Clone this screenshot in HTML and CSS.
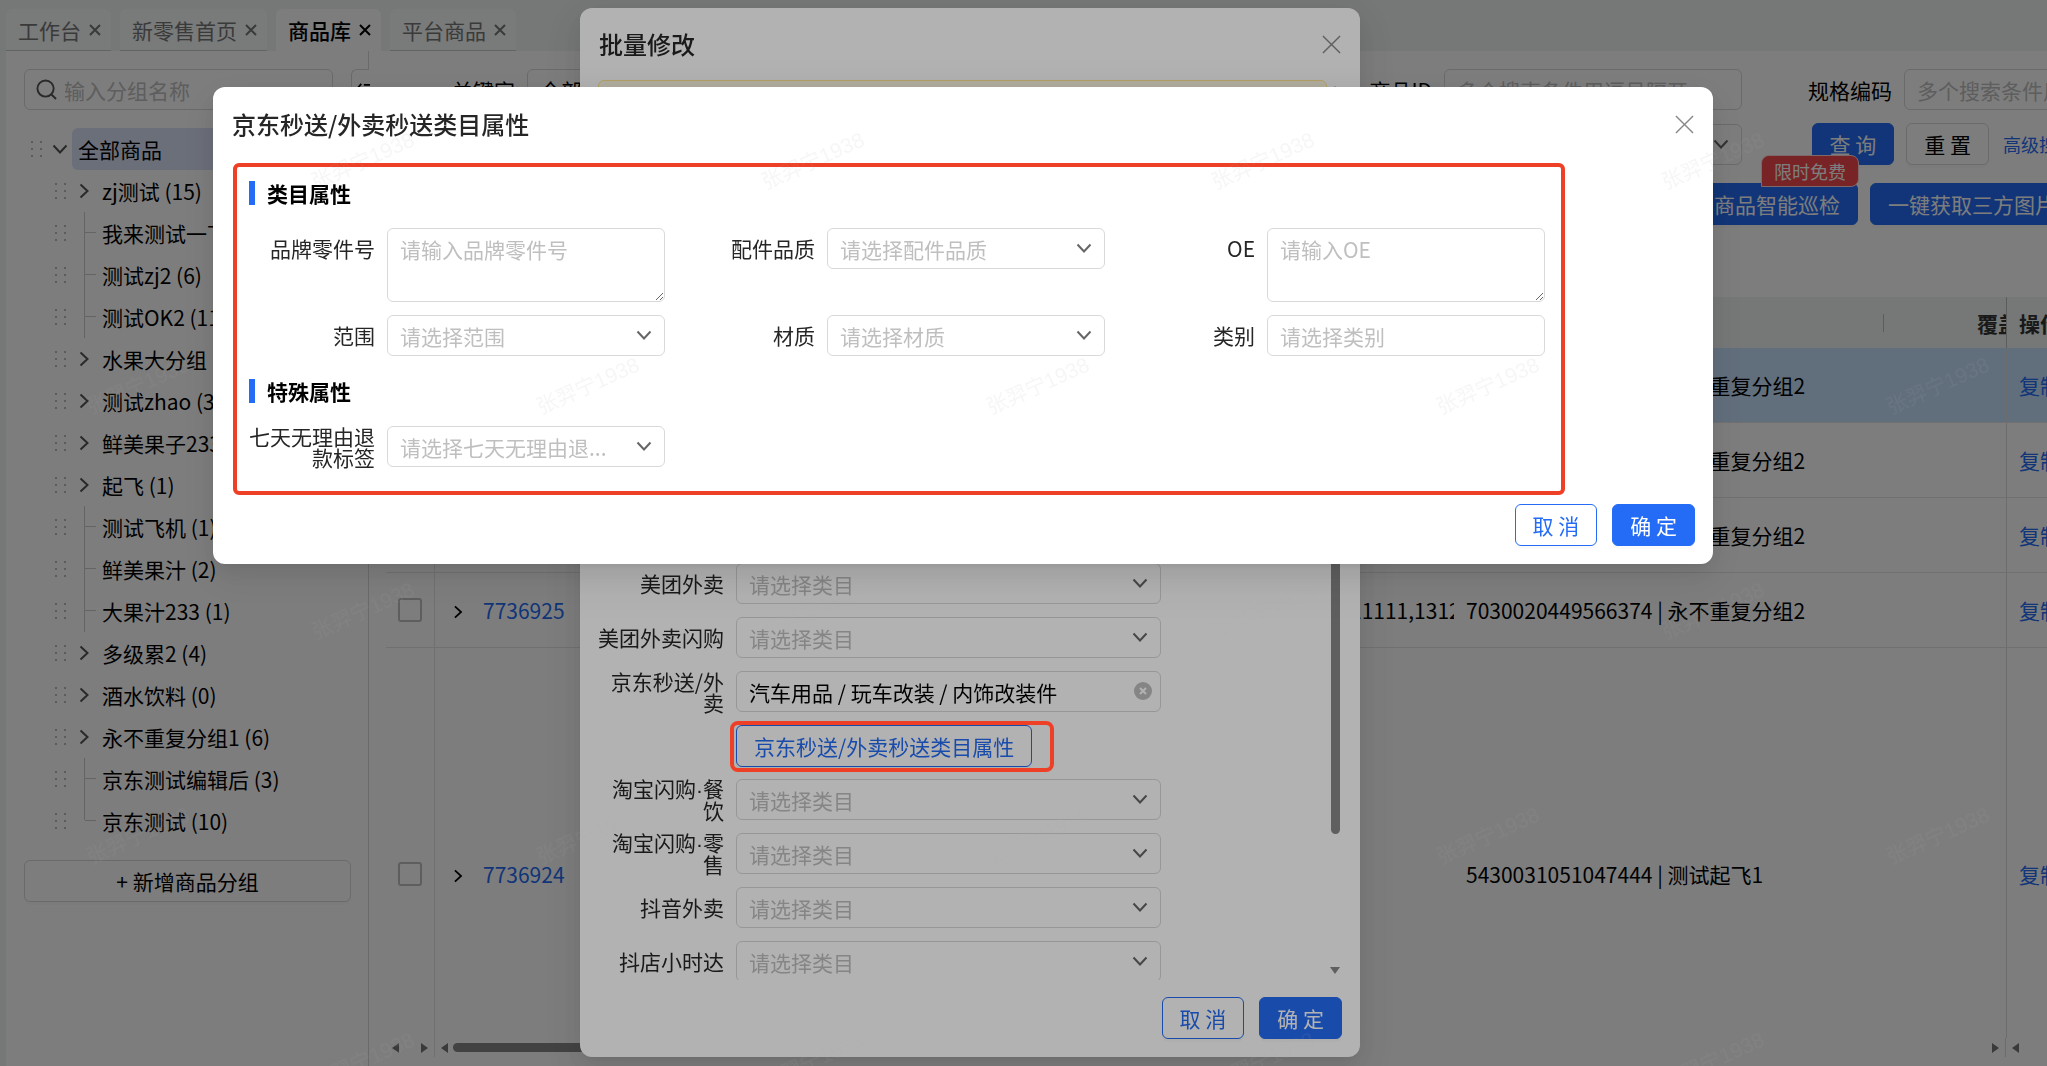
FILE: index.html
```html
<!DOCTYPE html>
<html lang="zh-CN">

<head>
    <meta charset="UTF-8">
    <meta name="viewport" content="width=device-width, initial-scale=1.0">
    <title>商品库</title>
    <link rel="stylesheet" href="styles.css">
</head>

<body>

    <!-- icons -->
    <svg class="sprite" aria-hidden="true">
        <symbol id="down" viewBox="0 0 16 16">
            <path d="M1.500 4.500 8 11.500l6.500-7" fill="none" stroke="currentColor" stroke-width="2" />
        </symbol>
        <symbol id="right" viewBox="0 0 16 16">
            <path d="M4.500 1.500 11.500 8l-7 6.500" fill="none" stroke="currentColor" stroke-width="2" />
        </symbol>
        <symbol id="close" viewBox="0 0 20 20">
            <path d="M1 1l18 18M19 1L1 19" fill="none" stroke="currentColor" stroke-width="1.500" />
        </symbol>
        <symbol id="cross" viewBox="0 0 12 12">
            <path d="M1 1l10 10M11 1L1 11" fill="none" stroke="currentColor" stroke-width="2" />
        </symbol>
        <symbol id="search" viewBox="0 0 22 22">
            <path d="M10 1.500a8.500 8.500 0 1 0 0 17a8.500 8.500 0 1 0 0-17M16 16l5 5" fill="none" stroke="currentColor" stroke-width="2" />
        </symbol>
        <symbol id="drag" viewBox="0 0 11 16">
            <path d="M0 0h2v2H0zM9 0h2v2H9zM0 7h2v2H0zM9 7h2v2H9zM0 14h2v2H0zM9 14h2v2H9z" fill="currentColor" />
        </symbol>
        <symbol id="clear" viewBox="0 0 18 18">
            <circle cx="9" cy="9" r="9" fill="currentColor" />
            <path d="M6 6l6 6M12 6l-6 6" stroke="#fff" stroke-width="2" />
        </symbol>
        <symbol id="arrow" viewBox="0 0 8 10">
            <path d="M0 0l7 5-7 5z" fill="currentColor" />
        </symbol>
    </svg>

    <div class="page">
        <nav class="tabs">
            <a href="#" class="tab">工作台<svg><use href="#cross" /></svg></a>
            <a href="#" class="tab">新零售首页<svg><use href="#cross" /></svg></a>
            <a href="#" class="tab active">商品库<svg><use href="#cross" /></svg></a>
            <a href="#" class="tab">平台商品<svg><use href="#cross" /></svg></a>
        </nav>

        <div class="workspace">
            <aside class="sidebar">
                <button class="fold" aria-label="收起"><svg viewBox="0 0 16 16"><path d="M6 1L1 7l5 6M9 2h7M9 8h7" fill="none" stroke="currentColor" stroke-width="2" /></svg></button>
                <label class="group-search">
                    <svg><use href="#search" /></svg>
                    <input type="text" placeholder="输入分组名称" aria-label="输入分组名称">
                </label>

                <ul class="tree">
                    <li class="root"><svg class="drag"><use href="#drag" /></svg><svg class="toggle"><use href="#down" /></svg><span class="name">全部商品</span></li>
                    <li><svg class="drag"><use href="#drag" /></svg><svg class="toggle"><use href="#right" /></svg><span class="name">zj测试 (15)</span></li>
                    <li><svg class="drag"><use href="#drag" /></svg><i class="branch"></i><span class="name">我来测试一下 (2)</span></li>
                    <li><svg class="drag"><use href="#drag" /></svg><i class="branch"></i><span class="name">测试zj2 (6)</span></li>
                    <li><svg class="drag"><use href="#drag" /></svg><i class="branch"></i><span class="name">测试OK2 (11)</span></li>
                    <li><svg class="drag"><use href="#drag" /></svg><svg class="toggle"><use href="#right" /></svg><span class="name">水果大分组 (8)</span></li>
                    <li><svg class="drag"><use href="#drag" /></svg><svg class="toggle"><use href="#right" /></svg><span class="name">测试zhao (3)</span></li>
                    <li><svg class="drag"><use href="#drag" /></svg><svg class="toggle"><use href="#right" /></svg><span class="name">鲜美果子233 (5)</span></li>
                    <li><svg class="drag"><use href="#drag" /></svg><svg class="toggle"><use href="#right" /></svg><span class="name">起飞 (1)</span></li>
                    <li><svg class="drag"><use href="#drag" /></svg><i class="branch"></i><span class="name">测试飞机 (1)</span></li>
                    <li><svg class="drag"><use href="#drag" /></svg><i class="branch"></i><span class="name">鲜美果汁 (2)</span></li>
                    <li><svg class="drag"><use href="#drag" /></svg><i class="branch"></i><span class="name">大果汁233 (1)</span></li>
                    <li><svg class="drag"><use href="#drag" /></svg><svg class="toggle"><use href="#right" /></svg><span class="name">多级累2 (4)</span></li>
                    <li><svg class="drag"><use href="#drag" /></svg><svg class="toggle"><use href="#right" /></svg><span class="name">酒水饮料 (0)</span></li>
                    <li><svg class="drag"><use href="#drag" /></svg><svg class="toggle"><use href="#right" /></svg><span class="name">永不重复分组1 (6)</span></li>
                    <li><svg class="drag"><use href="#drag" /></svg><i class="branch"></i><span class="name">京东测试编辑后 (3)</span></li>
                    <li><svg class="drag"><use href="#drag" /></svg><i class="branch last"></i><span class="name">京东测试 (10)</span></li>
                </ul>

                <button class="btn add-group">+ 新增商品分组</button>
            </aside>

            <main class="content">
                <div class="filters">
                    <div class="filter-row">
                        <label for="keyword">关键字</label>
                        <select id="keyword" class="field dark"><option>全部</option></select>
                        <label for="goods-id" class="push">商品ID</label>
                        <input id="goods-id" class="field" type="text" placeholder="多个搜索条件用逗号隔开">
                        <label for="spec-code" class="spec">规格编码</label>
                        <input id="spec-code" class="field" type="text" placeholder="多个搜索条件用逗号隔开">
                    </div>
                    <div class="filter-row second">
                        <div class="select state">
                            <select class="field" aria-label="状态"><option></option></select>
                            <svg><use href="#down" /></svg>
                        </div>
                        <button class="btn primary">查 询</button>
                        <button class="btn">重 置</button>
                        <a href="#" class="more">高级搜索</a>
                    </div>
                    <div class="filter-row third">
                        <button class="btn primary inspect">商品智能巡检<span class="badge">限时免费</span></button>
                        <button class="btn primary">一键获取三方图片</button>
                    </div>
                </div>

                <div class="table-box">
                    <table>
                        <colgroup>
                            <col class="c-check">
                            <col>
                            <col class="c-code">
                            <col class="c-cate">
                            <col class="c-cover">
                            <col class="c-op">
                        </colgroup>
                        <thead>
                            <tr>
                                <th></th>
                                <th></th>
                                <th></th>
                                <th><div class="split"></div></th>
                                <th class="cover">覆盖</th>
                                <th class="op">操作</th>
                            </tr>
                        </thead>
                        <tbody>
                            <tr class="selected">
                                <td class="check"><input type="checkbox" aria-label="选择7736928"></td>
                                <td class="id"><svg><use href="#right" /></svg><a href="#">7736928</a></td>
                                <td></td>
                                <td class="cate">7030020449566374 | 永不重复分组2</td>
                                <td></td>
                                <td class="op"><a href="#">复制</a></td>
                            </tr>
                            <tr>
                                <td class="check"><input type="checkbox" aria-label="选择7736927"></td>
                                <td class="id"><svg><use href="#right" /></svg><a href="#">7736927</a></td>
                                <td></td>
                                <td class="cate">7030020449566374 | 永不重复分组2</td>
                                <td></td>
                                <td class="op"><a href="#">复制</a></td>
                            </tr>
                            <tr>
                                <td class="check"><input type="checkbox" aria-label="选择7736926"></td>
                                <td class="id"><svg><use href="#right" /></svg><a href="#">7736926</a></td>
                                <td></td>
                                <td class="cate">7030020449566374 | 永不重复分组2</td>
                                <td></td>
                                <td class="op"><a href="#">复制</a></td>
                            </tr>
                            <tr>
                                <td class="check"><input type="checkbox" aria-label="选择7736925"></td>
                                <td class="id"><svg><use href="#right" /></svg><a href="#">7736925</a></td>
                                <td class="code">11111,1312</td>
                                <td class="cate">7030020449566374 | 永不重复分组2</td>
                                <td></td>
                                <td class="op"><a href="#">复制</a></td>
                            </tr>
                            <tr class="tall">
                                <td class="check"><input type="checkbox" aria-label="选择7736924"></td>
                                <td class="id"><svg><use href="#right" /></svg><a href="#">7736924</a></td>
                                <td></td>
                                <td class="cate">5430031051047444 | 测试起飞1</td>
                                <td></td>
                                <td class="op"><a href="#">复制</a></td>
                            </tr>
                        </tbody>
                    </table>
                </div>
                <div class="hscroll">
                    <div class="hs-left"><svg class="flip"><use href="#arrow" /></svg><svg><use href="#arrow" /></svg></div>
                    <div class="hs-main"><svg class="flip"><use href="#arrow" /></svg><div class="thumb"></div><svg><use href="#arrow" /></svg></div>
                    <div class="hs-right"><svg class="flip"><use href="#arrow" /></svg></div>
                </div>
            </main>
        </div>
    </div>

    <!-- batch edit -->
    <div class="mask mask-batch">
        <section class="modal batch" role="dialog" aria-labelledby="batch-title">
            <header class="modal-head">
                <h2 id="batch-title">批量修改</h2>
                <button class="x" aria-label="关闭"><svg><use href="#close" /></svg></button>
            </header>
            <div class="batch-body">
                <div class="batch-form">
                    <div class="notice"></div>
                    <div class="item">
                        <label for="mt">美团外卖</label>
                        <div class="select"><select id="mt" class="field"><option>请选择类目</option></select><svg><use href="#down" /></svg></div>
                    </div>
                    <div class="item">
                        <label for="mtsg">美团外卖闪购</label>
                        <div class="select"><select id="mtsg" class="field"><option>请选择类目</option></select><svg><use href="#down" /></svg></div>
                    </div>
                    <div class="item">
                        <label for="jd">京东秒送/外卖</label>
                        <div class="select"><select id="jd" class="field dark"><option>汽车用品 / 玩车改装 / 内饰改装件</option></select><svg class="clear"><use href="#clear" /></svg></div>
                    </div>
                    <div class="item indent">
                        <button class="btn ghost">京东秒送/外卖秒送类目属性</button>
                    </div>
                    <div class="item">
                        <label for="tbcy">淘宝闪购<span class="dot">·</span>餐饮</label>
                        <div class="select"><select id="tbcy" class="field"><option>请选择类目</option></select><svg><use href="#down" /></svg></div>
                    </div>
                    <div class="item">
                        <label for="tbls">淘宝闪购<span class="dot">·</span>零售</label>
                        <div class="select"><select id="tbls" class="field"><option>请选择类目</option></select><svg><use href="#down" /></svg></div>
                    </div>
                    <div class="item">
                        <label for="dy">抖音外卖</label>
                        <div class="select"><select id="dy" class="field"><option>请选择类目</option></select><svg><use href="#down" /></svg></div>
                    </div>
                    <div class="item">
                        <label for="dd">抖店小时达</label>
                        <div class="select"><select id="dd" class="field"><option>请选择类目</option></select><svg><use href="#down" /></svg></div>
                    </div>
                </div>
                <div class="vscroll">
                    <svg class="up"><use href="#arrow" /></svg>
                    <div class="thumb"></div>
                    <svg class="down"><use href="#arrow" /></svg>
                </div>
            </div>
            <footer class="modal-foot">
                <button class="btn ghost">取 消</button>
                <button class="btn primary">确 定</button>
            </footer>
        </section>
    </div>

    <!-- category attributes -->
    <div class="mask mask-attr">
        <section class="modal attr" role="dialog" aria-labelledby="attr-title">
            <header class="modal-head">
                <h2 id="attr-title">京东秒送/外卖秒送类目属性</h2>
                <button class="x" aria-label="关闭"><svg><use href="#close" /></svg></button>
            </header>
            <div class="attr-body">
                <h3>类目属性</h3>
                <div class="attr-grid">
                    <div class="item">
                        <label for="brand">品牌零件号</label>
                        <textarea id="brand" class="field" placeholder="请输入品牌零件号"></textarea>
                    </div>
                    <div class="item">
                        <label for="quality">配件品质</label>
                        <div class="select"><select id="quality" class="field"><option>请选择配件品质</option></select><svg><use href="#down" /></svg></div>
                    </div>
                    <div class="item">
                        <label for="oe">OE</label>
                        <textarea id="oe" class="field" placeholder="请输入OE"></textarea>
                    </div>
                    <div class="item">
                        <label for="range">范围</label>
                        <div class="select"><select id="range" class="field"><option>请选择范围</option></select><svg><use href="#down" /></svg></div>
                    </div>
                    <div class="item">
                        <label for="material">材质</label>
                        <div class="select"><select id="material" class="field"><option>请选择材质</option></select><svg><use href="#down" /></svg></div>
                    </div>
                    <div class="item">
                        <label for="kind">类别</label>
                        <input id="kind" class="field" type="text" placeholder="请选择类别">
                    </div>
                </div>
                <h3>特殊属性</h3>
                <div class="attr-grid">
                    <div class="item">
                        <label for="seven">七天无理由退款标签</label>
                        <div class="select"><select id="seven" class="field"><option>请选择七天无理由退...</option></select><svg><use href="#down" /></svg></div>
                    </div>
                </div>
            </div>
            <footer class="modal-foot">
                <button class="btn ghost">取 消</button>
                <button class="btn primary">确 定</button>
            </footer>
        </section>
    </div>

    <div class="callout"></div>

    <svg class="watermark" aria-hidden="true">
        <defs>
            <pattern id="wm" width="450" height="450" patternUnits="userSpaceOnUse">
                <text x="363" y="168" text-anchor="middle" transform="rotate(-24 363 161)">张羿宁1938</text>
                <text x="138" y="393" text-anchor="middle" transform="rotate(-24 138 386)">张羿宁1938</text>
            </pattern>
        </defs>
        <rect width="100%" height="100%" fill="url(#wm)" />
    </svg>

</body>

</html>
```
FILE: styles.css
```css
* {
    box-sizing: border-box;
}

body {
    margin: 0;
    height: 100vh;
    overflow: hidden;
    font-family: "Noto Sans CJK SC", sans-serif;
    font-size: 21px;
    line-height: 30px;
    color: #000;
    background: #eff4f2;
}

a {
    color: #246cf5;
    text-decoration: none;
}

button,
input,
select,
textarea {
    font: inherit;
    color: inherit;
}

button {
    cursor: pointer;
}

.sprite {
    display: none;
}

.page {
    height: 100vh;
    padding: 9px 0 0 6px;
    display: flex;
    flex-direction: column;
}

/* tabs */
.tabs {
    display: flex;
    gap: 9px;
}

.tab {
    display: flex;
    align-items: center;
    gap: 8px;
    height: 42px;
    padding: 0 10px 0 12px;
    background: #f6f8f8;
    border-bottom: 1px solid #c8cccc;
    border-radius: 6px 6px 0 0;
    color: #777;
}

.tab svg {
    width: 12px;
    height: 12px;
}

.tab.active {
    background: #fff;
    border-color: #fff;
    color: #000;
    font-weight: 500;
}

.workspace {
    flex: 1;
    min-height: 0;
    display: flex;
    background: #fff;
}

/* sidebar */
.sidebar {
    position: relative;
    width: 363px;
    flex: none;
    padding: 18px 17px 0 18px;
    border-right: 1px solid #d9d9d9;
}

.fold {
    position: absolute;
    top: 18px;
    right: -1px;
    width: 18px;
    height: 42px;
    padding: 0 0 0 4px;
    background: #fff;
    border: solid #d9d9d9;
    border-width: 1px 0 1px 1px;
    border-radius: 6px 0 0 6px;
}

.fold svg {
    display: block;
    width: 14px;
    height: 14px;
}

.group-search {
    display: flex;
    align-items: center;
    gap: 7px;
    width: 309px;
    height: 41px;
    padding: 0 11px;
    border: 1px solid #d9d9d9;
    border-radius: 6px;
    color: #555;
}

.group-search svg {
    width: 21px;
    height: 21px;
    flex: none;
}

.group-search input {
    flex: 1;
    min-width: 0;
    padding: 0;
    border: none;
    outline: none;
    background: none;
}

::placeholder {
    color: #bfbfbf;
    opacity: 1;
}

.tree {
    list-style: none;
    margin: 18px 0 18px -18px;
    padding: 0;
}

.tree li {
    display: flex;
    align-items: center;
    height: 42px;
    padding-left: 49px;
}

.tree li.root {
    padding-left: 25px;
}

.drag {
    width: 11px;
    height: 16px;
    margin-right: 6px;
    flex: none;
    color: #bbb;
}

.toggle {
    width: 16px;
    height: 16px;
    margin: 0 4px;
    flex: none;
    color: #555;
}

.branch {
    align-self: stretch;
    flex: none;
    width: 12px;
    margin-left: 12px;
    border-left: 1px solid #ccc;
}

.branch::before {
    content: "";
    display: block;
    height: 20px;
    border-bottom: 1px solid #ccc;
}

.branch.last {
    height: 20px;
}

.tree .name {
    flex: 1;
    padding: 0 6px;
    line-height: 42px;
    border-radius: 6px;
    white-space: nowrap;
}

.tree .root .name {
    background: #dbe2f8;
}

/* controls */
.btn {
    height: 42px;
    padding: 0 17px;
    border: 1px solid #d9d9d9;
    border-radius: 6px;
    background: #fff;
    white-space: nowrap;
    box-shadow: 0 3px 0 rgba(0, 0, 0, 0.02);
}

.btn.primary {
    background: #246cf5;
    border-color: #246cf5;
    color: #fff;
}

.btn.ghost {
    border-color: #246cf5;
    color: #246cf5;
}

.add-group {
    width: 100%;
}

.field {
    display: block;
    width: 100%;
    height: 41px;
    padding: 0 12px;
    border: 1px solid #d9d9d9;
    border-radius: 6px;
    background: #fff;
    color: #bfbfbf;
    outline: none;
    appearance: none;
    white-space: nowrap;
    overflow: hidden;
    text-overflow: ellipsis;
}

.field.dark {
    color: #000;
}

textarea.field {
    height: 74px;
    padding: 4px 12px;
    line-height: 33px;
    resize: both;
}

.select {
    position: relative;
}

.select .field {
    padding-right: 54px;
}

.select svg {
    position: absolute;
    right: 13px;
    top: 12px;
    width: 16px;
    height: 16px;
    color: #666;
    pointer-events: none;
}

.select svg.clear {
    top: 11px;
    right: 9px;
    width: 18px;
    height: 18px;
    color: #bfbfbf;
}

/* filters */
.content {
    flex: 1;
    min-width: 0;
    display: flex;
    flex-direction: column;
    overflow: hidden;
}

.filters {
    padding: 18px 0 0 83px;
}

.filter-row {
    display: flex;
    align-items: center;
    gap: 12px;
    margin: 0 -155px 13px 0;
}

.filter-row .field {
    width: 298px;
    flex: none;
}

.filter-row label {
    white-space: nowrap;
}

.filter-row .push {
    margin-left: auto;
}

.filter-row .spec {
    margin-left: 54px;
}

.filter-row.second {
    justify-content: flex-end;
    margin: 0 -28px 18px 0;
}

.filter-row .state {
    margin-right: 58px;
}

.more {
    margin-left: 2px;
    font-size: 18px;
}

.filter-row.third {
    justify-content: flex-end;
    margin: 0 -27px 0 0;
}

.inspect {
    position: relative;
}

.badge {
    position: absolute;
    top: -29px;
    right: -2px;
    height: 32px;
    padding: 0 12px;
    border: 1px solid #ffd6d6;
    border-radius: 8px 8px 8px 0;
    background: #f5484e;
    color: #fff;
    font-size: 18px;
    line-height: 30px;
}

/* table */
.table-box {
    flex: 1;
    min-height: 0;
    margin: 72px 0 0 17px;
    overflow: hidden;
}

table {
    width: 100%;
    border-collapse: separate;
    border-spacing: 0;
    table-layout: fixed;
}

.c-check {
    width: 49px;
}

.c-code {
    width: 112px;
}

.c-cate {
    width: 430px;
}

.c-cover {
    width: 122px;
}

.c-op {
    width: 41px;
}

th {
    height: 51px;
    padding: 0;
    background: #eff4f2;
    text-align: left;
    color: #333;
    font-weight: 700;
    white-space: nowrap;
    overflow: hidden;
}

th .split {
    height: 18px;
    border-right: 1px solid #bbb;
}

th.cover {
    padding-left: 93px;
}

td {
    height: 75px;
    padding: 0;
    border-bottom: 1px solid #e5e5e5;
    white-space: nowrap;
    overflow: hidden;
}

.tall td {
    height: 453px;
}

.selected td {
    background: #c7e1fd;
}

.check {
    border-right: 1px solid #e5e5e5;
    text-align: center;
}

.check input {
    appearance: none;
    display: block;
    width: 24px;
    height: 24px;
    margin: 0 auto;
    border: 2px solid #bfbfbf;
    border-radius: 3px;
}

.id svg {
    width: 14px;
    height: 14px;
    margin: 0 18px 0 16px;
}

.code {
    padding-left: 8px;
}

.cate {
    padding-left: 12px;
}

.op {
    padding-left: 12px;
    border-left: 1px solid #ddd;
}

th.op {
    border-left-color: #bbb;
}

.hscroll {
    display: flex;
    height: 19px;
    margin: 0 0 9px 17px;
    color: #777;
}

.hscroll svg {
    width: 8px;
    height: 10px;
}

.hscroll .flip {
    transform: rotate(180deg);
}

.hscroll > div {
    display: flex;
    align-items: center;
    justify-content: space-between;
    padding: 0 5px;
}

.hs-left {
    width: 49px;
    border-right: 1px solid #e5e5e5;
}

.hs-main {
    flex: 1;
}

.hs-main .thumb {
    width: 400px;
    height: 9px;
    margin: 0 auto 0 5px;
    border-radius: 5px;
    background: #888;
}

.hs-right {
    width: 42px;
    border-left: 1px solid #ddd;
}

/* modals */
.mask {
    position: fixed;
    inset: 0;
    display: flex;
    justify-content: center;
    align-items: flex-start;
    background: rgba(0, 0, 0, 0.3);
}

.mask-batch {
    padding: 8px 107px 0 0;
}

.mask-attr {
    padding: 87px 121px 0 0;
}

.modal {
    border-radius: 12px;
    background: #fff;
    box-shadow: 0 9px 24px rgba(0, 0, 0, 0.08), 0 4px 9px -6px rgba(0, 0, 0, 0.12), 0 13px 42px 12px rgba(0, 0, 0, 0.05);
}

.batch {
    width: 780px;
}

.attr {
    width: 1500px;
    max-width: 100%;
}

.modal-head {
    display: flex;
    align-items: center;
    justify-content: space-between;
    padding: 18px 19px;
}

.attr .modal-head {
    padding: 19px 19px 21px;
}

.modal-head h2 {
    margin: 0;
    font-size: 24px;
    line-height: 36px;
    font-weight: 500;
    color: #262626;
}

.x {
    padding: 0;
    border: none;
    background: none;
    color: #888;
}

.x svg {
    display: block;
    width: 19px;
    height: 19px;
}

.modal-foot {
    display: flex;
    justify-content: flex-end;
    gap: 15px;
    padding: 0 18px 18px;
}

.modal label {
    flex: none;
    width: 126px;
    line-height: 21px;
    text-align: right;
    color: #262626;
}

.item {
    display: flex;
    gap: 12px;
    align-items: center;
}

.item > .select,
.item > .field {
    flex: 1;
    min-width: 0;
}

.batch-body {
    display: flex;
    gap: 3px;
    height: calc(100vh - 166px);
    margin-bottom: 17px;
    padding: 0 20px 0 18px;
}

.batch-form {
    flex: 1;
    overflow: hidden;
}

.notice {
    height: 60px;
    margin-bottom: 423px;
    border: 1px solid #ffe58f;
    border-radius: 6px;
    background: #fffbe6;
}

.batch-form .item {
    height: 41px;
    margin-bottom: 13px;
}

.batch-form .indent {
    padding-left: 138px;
}

.batch-form .select {
    flex: none;
    width: 425px;
}

.dot {
    font-family: "Liberation Sans", sans-serif;
}

.vscroll {
    display: flex;
    flex-direction: column;
    align-items: center;
    width: 10px;
    padding: 4px 0;
    color: #888;
}

.vscroll svg {
    width: 8px;
    height: 10px;
}

.vscroll .up {
    transform: rotate(-90deg);
}

.vscroll .down {
    margin-top: auto;
    transform: rotate(90deg);
}

.vscroll .thumb {
    width: 9px;
    height: 734px;
    margin-top: 6px;
    border-radius: 5px;
    background: #888;
}

.attr-body {
    margin: 0 148px 9px 20px;
    padding: 10px 16px 24px 12px;
    border: 4px solid #ee4026;
    border-radius: 6px;
}

.attr-body h3 {
    display: flex;
    align-items: center;
    gap: 12px;
    margin: 0 0 19px;
    font-size: 21px;
    line-height: 32px;
    font-weight: 700;
}

.attr-body h3::before {
    content: "";
    width: 6px;
    height: 24px;
    background: #246cf5;
}

.attr-grid {
    display: grid;
    grid-template-columns: repeat(3, 1fr);
    gap: 13px 24px;
}

.attr-grid + h3 {
    margin-top: 19px;
}

.attr-grid .item {
    align-items: flex-start;
}

.attr-grid label {
    display: flex;
    align-items: center;
    justify-content: flex-end;
    height: 41px;
}

/* red frame round the attribute button, above both masks */
.callout {
    position: fixed;
    top: 721px;
    left: calc(50% - 294px);
    width: 324px;
    height: 51px;
    border: 4px solid #ee4026;
    border-radius: 8px;
    pointer-events: none;
}

.watermark {
    position: fixed;
    inset: 0;
    width: 100%;
    height: 100%;
    pointer-events: none;
}

.watermark text {
    font-family: "Liberation Sans", "Noto Sans CJK SC", sans-serif;
    font-size: 21px;
    fill: rgba(170, 170, 170, 0.1);
}
```
